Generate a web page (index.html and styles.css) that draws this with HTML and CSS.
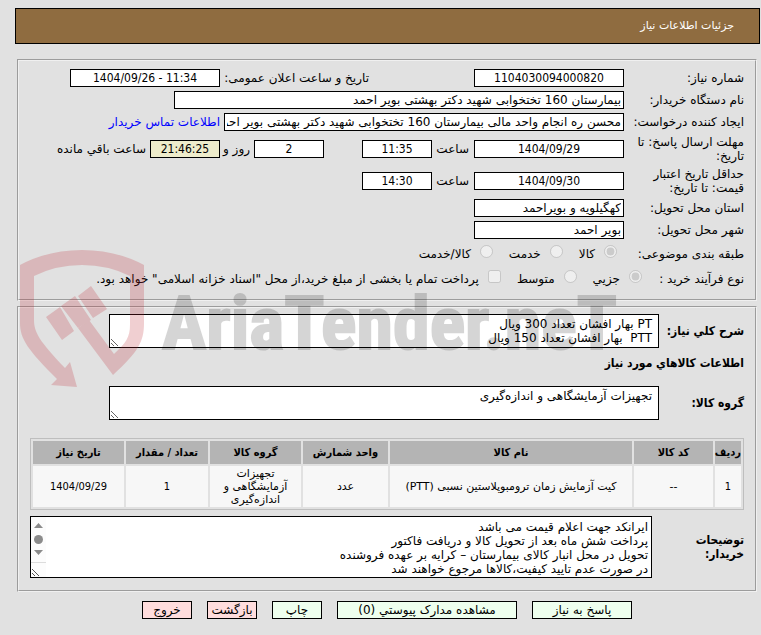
FILE: index.html
```
<!DOCTYPE html>
<html lang="fa" dir="rtl">
<head>
    <meta charset="UTF-8">
    <meta name="viewport" content="width=device-width, initial-scale=1.0">
    <title>جزئیات اطلاعات نیاز</title>
    <link rel="stylesheet" href="styles.css">
</head>
<body>

    <h1 class="page-title">جزئیات اطلاعات نیاز</h1>

    <main class="content">
        <section class="panel">
            <div class="row">
                <label class="label" for="needNo">شماره نیاز:</label>
                <input class="field w-150" id="needNo" value="1104030094000820" readonly>
                <label class="label-public" for="publicDate">تاریخ و ساعت اعلان عمومی:</label>
                <input class="field w-150" id="publicDate" value="1404/09/26 - 11:34" dir="ltr" readonly>
            </div>
            <div class="row">
                <label class="label" for="buyer">نام دستگاه خریدار:</label>
                <input class="field w-450 start" id="buyer" value="بیمارستان 160 تختخوابی شهید دکتر بهشتی بویر احمد" readonly>
            </div>
            <div class="row">
                <label class="label" for="creator">ایجاد کننده درخواست:</label>
                <input class="field w-400 start" id="creator" value="محسن ره انجام واحد مالی بیمارستان 160 تختخوابی شهید دکتر بهشتی بویر احمد" readonly>
                <a class="contact" href="#">اطلاعات تماس خریدار</a>
            </div>
            <div class="row tall">
                <label class="label" for="replyDate">مهلت ارسال پاسخ: تا تاریخ:</label>
                <input class="field w-150" id="replyDate" value="1404/09/29" readonly>
                <label class="label-hour" for="replyHour">ساعت</label>
                <input class="field w-70" id="replyHour" value="11:35" readonly>
                <input class="field w-70 days" id="days" value="2" readonly>
                <label class="label-days" for="days">روز و</label>
                <input class="field w-70 timer" id="timer" value="21:46:25" readonly>
                <label class="label-left" for="timer">ساعت باقي مانده</label>
            </div>
            <div class="row tall">
                <label class="label" for="priceDate">حداقل تاریخ اعتبار قیمت: تا تاریخ:</label>
                <input class="field w-150" id="priceDate" value="1404/09/30" readonly>
                <label class="label-hour" for="priceHour">ساعت</label>
                <input class="field w-70" id="priceHour" value="14:30" readonly>
            </div>
            <div class="row">
                <label class="label" for="province">استان محل تحویل:</label>
                <input class="field w-150 start" id="province" value="کهگیلویه و بویراحمد" readonly>
            </div>
            <div class="row">
                <label class="label" for="city">شهر محل تحویل:</label>
                <input class="field w-150 start" id="city" value="بویر احمد" readonly>
            </div>
            <div class="row options">
                <span class="label">طبقه بندی موضوعی:</span>
                <label class="option"><input type="radio" name="category" checked disabled>کالا</label>
                <label class="option"><input type="radio" name="category" disabled>خدمت</label>
                <label class="option"><input type="radio" name="category" disabled>کالا/خدمت</label>
            </div>
            <div class="row options process">
                <span class="label">نوع فرآیند خرید :</span>
                <label class="option"><input type="radio" name="process" checked disabled>جزیي</label>
                <label class="option"><input type="radio" name="process" disabled>متوسط</label>
                <label class="option"><input type="checkbox" disabled>پرداخت تمام یا بخشی از مبلغ خرید،از محل "اسناد خزانه اسلامی" خواهد بود.</label>
            </div>
        </section>

        <section class="panel goods">
            <div class="row">
                <label class="label-bold" for="summary">شرح کلي نیاز:</label>
                <textarea class="area summary" id="summary" readonly>PT بهار افشان تعداد 300 ویال
PTT  بهار افشان تعداد 150 ویال</textarea>
            </div>
            <h2 class="heading">اطلاعات کالاهاي مورد نیاز</h2>
            <div class="row">
                <label class="label-bold" for="group">گروه کالا:</label>
                <textarea class="area group" id="group" readonly>تجهیزات آزمایشگاهی و اندازه‌گیری</textarea>
            </div>

            <table class="items">
                <colgroup>
                    <col class="c-row">
                    <col class="c-code">
                    <col>
                    <col class="c-unit">
                    <col class="c-group">
                    <col class="c-count">
                    <col class="c-date">
                </colgroup>
                <thead>
                    <tr>
                        <th>ردیف</th>
                        <th>کد کالا</th>
                        <th>نام کالا</th>
                        <th>واحد شمارش</th>
                        <th>گروه کالا</th>
                        <th>تعداد / مقدار</th>
                        <th>تاریخ نیاز</th>
                    </tr>
                </thead>
                <tbody>
                    <tr>
                        <td class="num">1</td>
                        <td>--</td>
                        <td>کیت آزمایش زمان ترومبوپلاستین نسبی (PTT)</td>
                        <td>عدد</td>
                        <td>تجهیزات آزمایشگاهی و اندازه‌گیری</td>
                        <td class="num">1</td>
                        <td class="num">1404/09/29</td>
                    </tr>
                </tbody>
            </table>

            <div class="row">
                <label class="label-bold label-notes" for="notes">توضیحات خریدار:</label>
                <div class="notes-box">
                    <textarea class="area notes" id="notes" readonly>ایرانکد جهت اعلام قیمت می باشد
پرداخت شش ماه بعد از تحویل کالا و دریافت فاکتور
تحویل در محل انبار کالای بیمارستان – کرایه بر عهده فروشنده
در صورت عدم تایید کیفیت،کالاها مرجوع خواهند شد</textarea>
                    <svg class="scroll" viewBox="0 0 15 60" aria-hidden="true">
                        <path d="M0 0h15v60H0z" fill="#fcfcfc"/>
                        <path d="M3 11l4.500-5 4.500 5z" fill="#8b8b8b"/>
                        <circle cx="7.500" cy="22.500" r="4.500" fill="#8b8b8b"/>
                        <path d="M3 33h9l-4.500 5z" fill="#8b8b8b"/>
                        <path d="M0 45.500h15" stroke="#dcdcdc"/>
                        <path d="M1 52l7 7M1 56l3 3" stroke="#555" fill="none"/>
                    </svg>
                </div>
            </div>
        </section>

        <div class="buttons">
            <button class="btn w-100" type="button">پاسخ به نیاز</button>
            <button class="btn w-180" type="button">مشاهده مدارک پیوستي (0)</button>
            <button class="btn" type="button">چاپ</button>
            <button class="btn red" type="button">بازگشت</button>
            <button class="btn red" type="button">خروج</button>
        </div>

        <div class="watermark" aria-hidden="true">
            <svg class="shield" viewBox="0 0 126 138">
                <path d="M0 15Q28 0 62 0T124 15V73C124 92 118 102 93 125L58 78 69 70 94 104C106 93 110 87 110 75V26Q88 15 62 15T14 26V70C14 82 19 91 45 118L50 112 57 137 31 135 37 129C8 100 0 89 0 73Z"/>
                <path d="M26 67L40 57 54 81 42 90ZM41 56L55 46 71 70 58 78ZM58 46L71 36 87 59 73 68Z"/>
            </svg>
            <span class="brand">AriaTender.neT</span>
        </div>
    </main>

</body>
</html>
```
FILE: styles.css
```
* {
    box-sizing: border-box;
}

body {
    margin: 0;
    padding: 8px 1px 8px 15px;
    background-color: #e1e1e1;
    color: #000;
    font-family: "DejaVu Sans", sans-serif;
    font-size: 12px;
    line-height: 14px;
}

.page-title {
    margin: 0 0 15px;
    padding: 10px 25px;
    border: 1px solid #000;
    background-color: #8f6c40;
    color: #fff;
    font-size: 11px;
    font-weight: normal;
    line-height: 14px;
}

.content {
    position: relative;
    padding: 0 3px 0 2px;
}

.panel {
    margin-bottom: 5px;
    padding: 6px 11px 8px;
    border: 2px groove #f0f0f0;
}

.row {
    display: flex;
    align-items: center;
    min-height: 22px;
}

.tall {
    min-height: 32px;
}

.label {
    flex: none;
    width: 120px;
    padding-left: 5px;
}

.field {
    flex: none;
    height: 18px;
    padding: 0 2px;
    border: 1px solid #000;
    background-color: #fff;
    font-family: "DejaVu Sans Condensed", sans-serif;
    font-size: 12px;
    text-align: center;
}

.start {
    font-family: "DejaVu Sans", sans-serif;
    text-align: right;
}

.w-150 {
    width: 150px;
}

.w-450 {
    width: 450px;
}

.w-400 {
    width: 400px;
}

.w-70 {
    width: 70px;
}

.timer {
    background-color: #eeeccb;
}

.label-public {
    width: 149px;
    margin-right: 105px;
    white-space: nowrap;
}

.label-hour {
    width: 42px;
    padding-right: 5px;
}

.days {
    margin-right: 38px;
}

.label-days {
    width: 34px;
    padding-right: 4px;
    white-space: nowrap;
}

.label-left,
.contact {
    padding-right: 4px;
    white-space: nowrap;
}

.contact {
    color: #00f;
    text-decoration: none;
}

.options {
    min-height: 25px;
}

.option {
    display: flex;
    align-items: center;
    gap: 9px;
    margin-left: 16px;
    white-space: nowrap;
}

.option input {
    width: 13px;
    height: 13px;
    margin: 0 0 4px;
}

.options .label {
    width: 127px;
}

.process .label {
    width: 102px;
}

.goods {
    padding-bottom: 12px;
}

.label-bold {
    flex: none;
    width: 85px;
    font-family: "DejaVu Sans Condensed", sans-serif;
    font-weight: bold;
}

.label-notes {
    width: 92px;
    padding-left: 30px;
}

.area {
    display: block;
    margin: 0;
    padding: 2px 6px;
    border: 1px solid #000;
    background-color: #fff;
    font-family: inherit;
    font-size: 12px;
    line-height: 14px;
    overflow: hidden;
}

.summary,
.group {
    width: 550px;
    height: 34px;
}

.heading {
    margin: 8px 0 16px;
    font-family: "DejaVu Sans Condensed", sans-serif;
    font-size: 12px;
    line-height: 14px;
}

.items {
    width: 100%;
    margin: 18px 0 6px;
    border: 1px solid #bebebe;
    border-spacing: 2px;
    table-layout: fixed;
    font-size: 11px;
    line-height: 13px;
    text-align: center;
}

.items th {
    height: 23px;
    padding: 0;
    background-color: #b4b4b4;
    font-family: "DejaVu Sans Condensed", sans-serif;
    white-space: nowrap;
}

.items td {
    height: 41px;
    padding: 0 8px;
    background-color: #f7f7f7;
}

.items .num {
    font-family: "DejaVu Sans Condensed", sans-serif;
}

.c-row {
    width: 26px;
}

.c-code {
    width: 79px;
}

.c-unit {
    width: 85px;
}

.c-group {
    width: 91px;
}

.c-count {
    width: 82px;
}

.c-date {
    width: 91px;
}

.notes-box {
    position: relative;
    flex: 1;
}

.notes {
    width: 100%;
    height: 62px;
    padding: 3px;
    resize: none;
}

.scroll {
    position: absolute;
    top: 1px;
    left: 1px;
    width: 15px;
    height: 60px;
}

.buttons {
    display: flex;
    justify-content: center;
    gap: 15px;
    padding-top: 4px;
}

.btn {
    width: 50px;
    height: 18px;
    padding: 0;
    border: 1px solid #000;
    background-color: #eeffee;
    color: #000;
    font-family: inherit;
    font-size: 12px;
    line-height: 14px;
    white-space: nowrap;
}

.w-100 {
    width: 100px;
}

.w-180 {
    width: 180px;
}

.red {
    background-color: #ffdddd;
}

/* logo laid over the form */
.watermark {
    position: absolute;
    top: 191px;
    left: 5px;
    display: flex;
    direction: ltr;
    gap: 16px;
    pointer-events: none;
}

.shield {
    width: 126px;
    height: 138px;
    fill: #be2832;
    opacity: 0.22;
}

.brand {
    padding-top: 24px;
    color: #000;
    font-family: "Liberation Sans Narrow", "Roboto Condensed", sans-serif;
    font-size: 74px;
    font-weight: bold;
    line-height: 100px;
    opacity: 0.16;
    -webkit-text-stroke: 2px #000;
}
```
